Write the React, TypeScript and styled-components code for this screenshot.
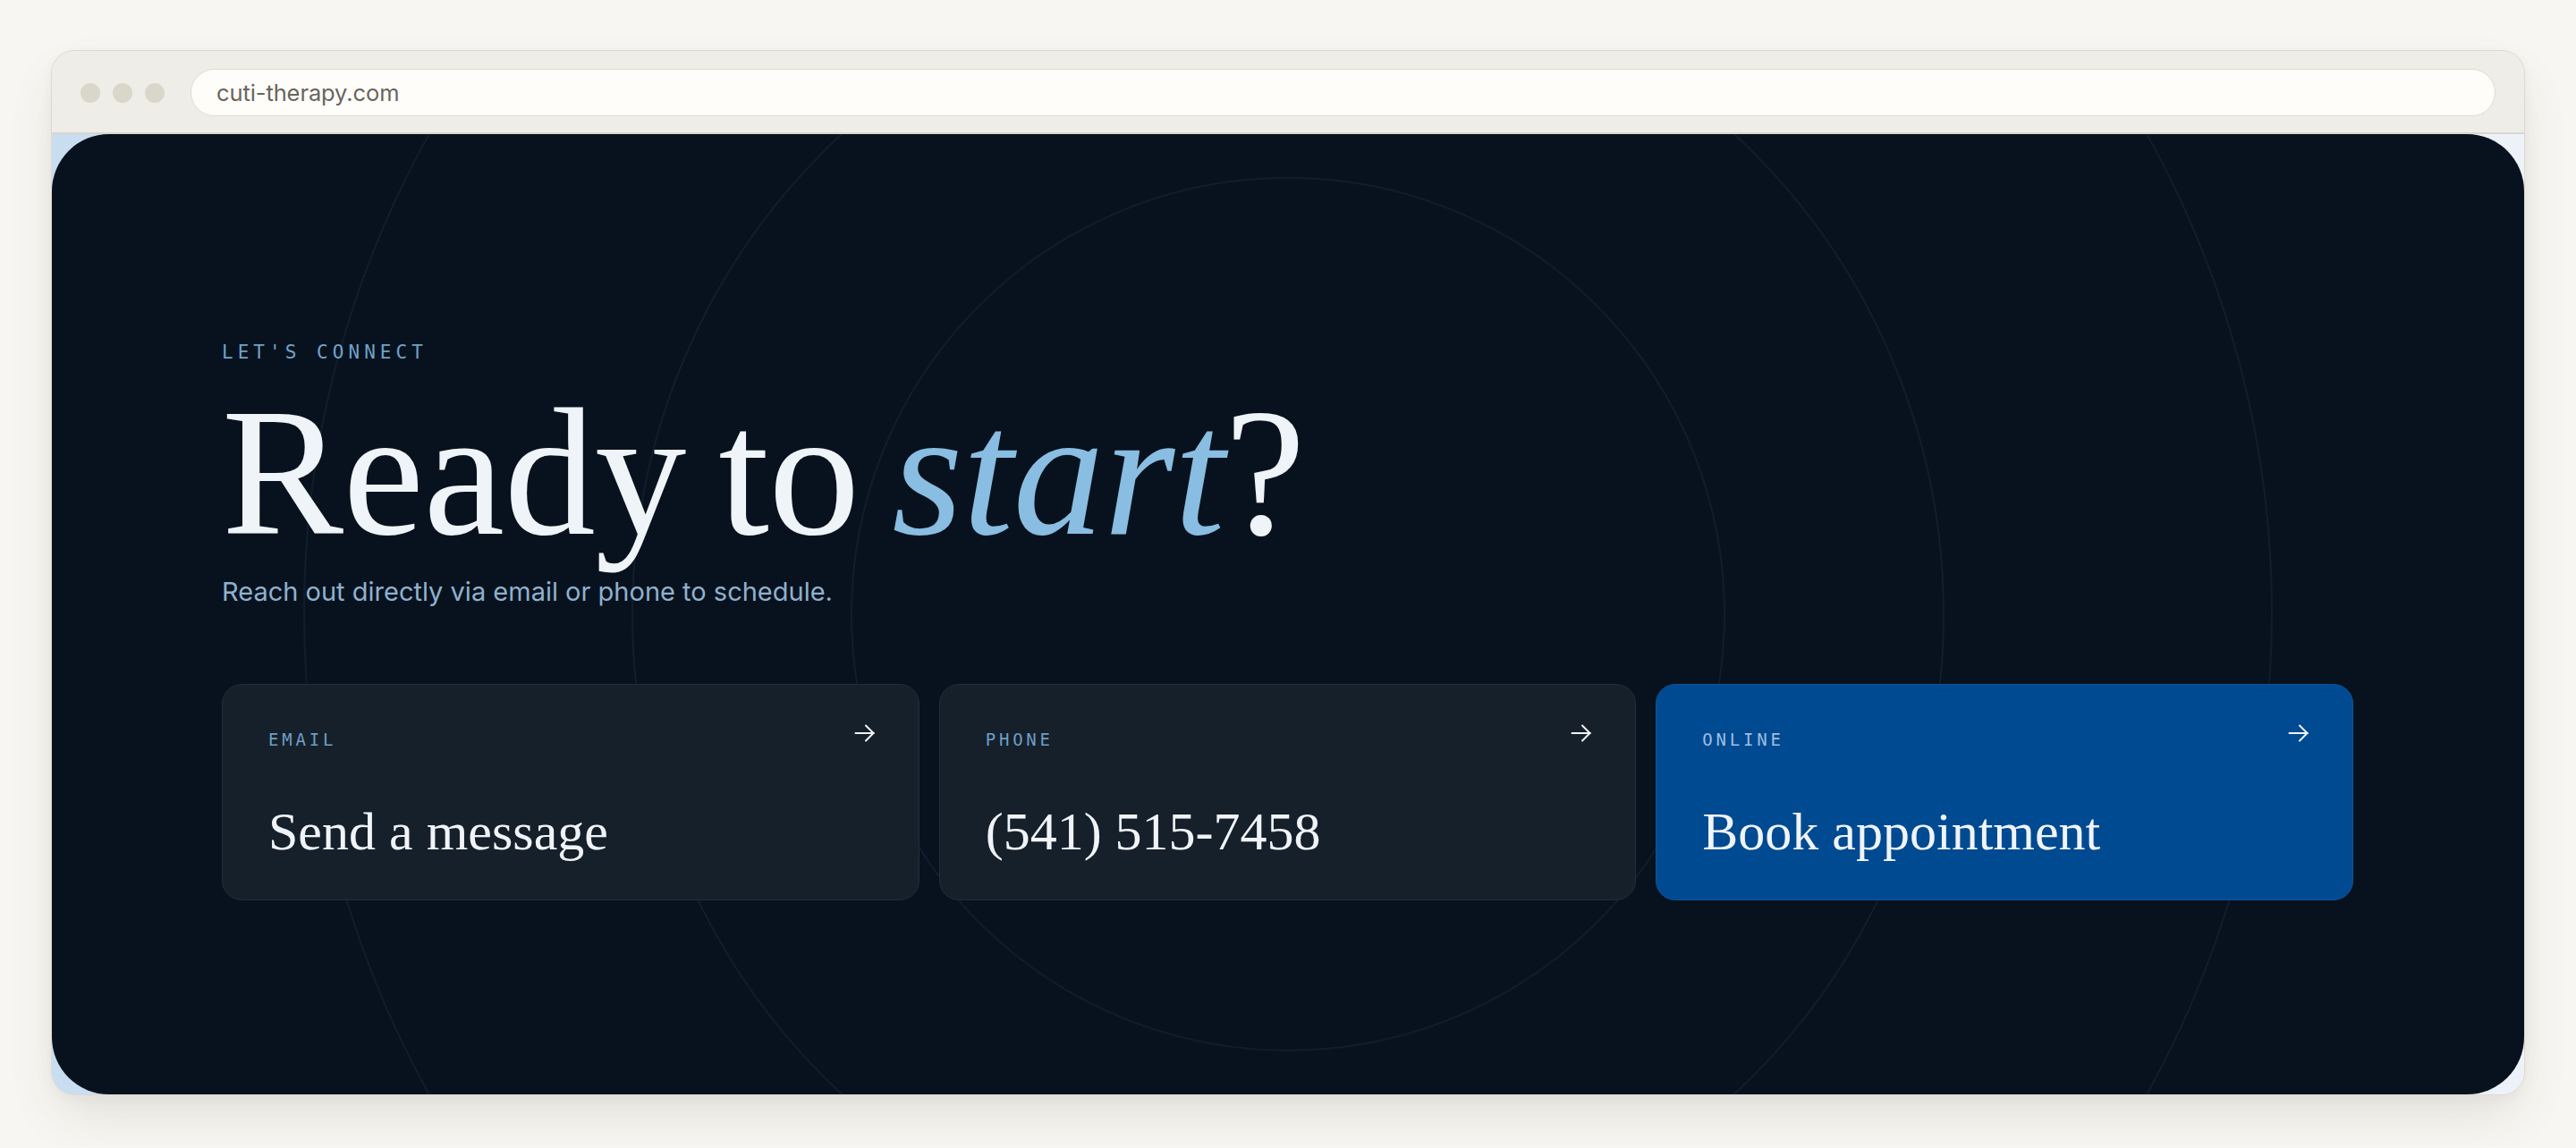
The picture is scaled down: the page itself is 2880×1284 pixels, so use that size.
import styled, { createGlobalStyle } from "styled-components";

const GlobalStyle = createGlobalStyle`
    html,
    body {
        margin: 0;
        background: #f7f6f2;
    }
    * {
        box-sizing: border-box;
    }
`;

const contacts = [
    { label: "EMAIL", title: "Send a message", primary: false },
    { label: "PHONE", title: "(541) 515-7458", primary: false },
    { label: "ONLINE", title: "Book appointment", primary: true },
];

// radii of the faint rings behind the hero copy
const rings = [488, 733, 1100];

function ArrowIcon() {
    return (
        <Arrow width="24" height="20" viewBox="0 0 24 20" fill="none">
            <path
                d="M1.5 10H22M13 1.5L21.5 10L13 18.5"
                stroke="currentColor"
                strokeWidth="2"
                strokeLinecap="round"
                strokeLinejoin="round"
            />
        </Arrow>
    );
}

export default function App() {
    return (
        <>
            <GlobalStyle />
            <Page>
                <BrowserFrame>
                    <TitleBar>
                        <Dots>
                            <Dot />
                            <Dot />
                            <Dot />
                        </Dots>
                        <AddressBar>cuti-therapy.com</AddressBar>
                    </TitleBar>
                    <Viewport>
                        <Panel>
                            <Rings>
                                {rings.map((r) => (
                                    <circle key={r} cx="50%" cy="50%" r={r} />
                                ))}
                            </Rings>
                            <Content>
                                <Eyebrow>LET'S CONNECT</Eyebrow>
                                <Heading>
                                    Ready to <Accent>start</Accent>?
                                </Heading>
                                <Lead>Reach out directly via email or phone to schedule.</Lead>
                                <CardRow>
                                    {contacts.map((c) => (
                                        <ContactCard key={c.label} $primary={c.primary}>
                                            <CardHead>
                                                <CardLabel $primary={c.primary}>{c.label}</CardLabel>
                                                <ArrowIcon />
                                            </CardHead>
                                            <CardTitle>{c.title}</CardTitle>
                                        </ContactCard>
                                    ))}
                                </CardRow>
                            </Content>
                        </Panel>
                    </Viewport>
                </BrowserFrame>
            </Page>
        </>
    );
}

const Page = styled.div`
    padding: 56px 57px 58px;
`;

const BrowserFrame = styled.div`
    border: 1px solid #dcd9d2;
    border-radius: 26px;
    overflow: hidden;
    background: #efede7;
    box-shadow: 0 26px 60px -12px rgba(70, 60, 40, 0.14), 0 4px 14px rgba(70, 60, 40, 0.04);
`;

const TitleBar = styled.div`
    display: flex;
    align-items: center;
    gap: 29px;
    height: 93px;
    padding: 2px 32px 0 32px;
    border-bottom: 2px solid #dad6ce;
    background: #efede7;
`;

const Dots = styled.div`
    display: flex;
    gap: 14px;
`;

const Dot = styled.span`
    width: 22px;
    height: 22px;
    border-radius: 50%;
    background: #d9d6ca;
`;

const AddressBar = styled.div`
    flex: 1;
    height: 53px;
    display: flex;
    align-items: center;
    padding-left: 28px;
    border: 1.5px solid #dedad3;
    border-radius: 999px;
    background: #fffdf9;
    color: #67655f;
    font-family: Inter, "Noto Sans", sans-serif;
    font-size: 25.5px;
    letter-spacing: -0.1px;
`;

const Viewport = styled.div`
    background: linear-gradient(90deg, #c9ddf1 0%, #dce8f4 50%, #ecf2f8 100%);
`;

const Panel = styled.section`
    position: relative;
    overflow: hidden;
    border-radius: 64px;
    background: #08121e;
`;

const Rings = styled.svg`
    position: absolute;
    inset: 0;
    width: 100%;
    height: 100%;
    pointer-events: none;

    circle {
        fill: none;
        stroke: rgba(140, 175, 215, 0.075);
        stroke-width: 2;
    }
`;

const Content = styled.div`
    position: relative;
    display: flex;
    flex-direction: column;
    padding: 234px 191px 217px 190px;
`;

const Eyebrow = styled.div`
    font-family: "DejaVu Sans Mono", "Liberation Mono", monospace;
    font-size: 21px;
    line-height: 21px;
    letter-spacing: 0.24em;
    color: #70a2c9;
`;

const Heading = styled.h1`
    margin: 21px 0 0;
    font-family: "Liberation Serif", "DejaVu Serif", serif;
    font-weight: 400;
    font-size: 204px;
    line-height: 204px;
    letter-spacing: -0.5px;
    word-spacing: -14px;
    color: #eff4f9;
`;

const Accent = styled.em`
    font-style: italic;
    color: #89bde1;
`;

const Lead = styled.p`
    margin: 13px 0 0;
    font-family: Inter, "Noto Sans", sans-serif;
    font-size: 29px;
    line-height: 1.3;
    color: #8fb1cd;
`;

const CardRow = styled.div`
    display: grid;
    grid-template-columns: repeat(3, 1fr);
    gap: 22px;
    margin-top: 84px;
`;

const ContactCard = styled.a<{ $primary: boolean }>`
    display: flex;
    flex-direction: column;
    gap: 63px;
    padding: 52px 48px 46px 51px;
    border-radius: 22px;
    border: 1px solid ${(p) => (p.$primary ? "#0b569e" : "#222d3a")};
    background: ${(p) => (p.$primary ? "#004a92" : "#16202b")};
    color: #f0f4f8;
    text-decoration: none;
    cursor: pointer;
`;

const CardHead = styled.div`
    display: flex;
    align-items: flex-start;
    justify-content: space-between;
`;

const CardLabel = styled.span<{ $primary: boolean }>`
    font-family: "DejaVu Sans Mono", "Liberation Mono", monospace;
    font-size: 19px;
    line-height: 19px;
    letter-spacing: 0.2em;
    color: ${(p) => (p.$primary ? "#9dbfe0" : "#6d9fc6")};
`;

const Arrow = styled.svg`
    margin-top: -8px;
    color: #f0f4f8;
`;

const CardTitle = styled.div`
    font-family: "Liberation Serif", "DejaVu Serif", serif;
    font-size: 60px;
    line-height: 60px;
    color: #f0f4f8;
`;
